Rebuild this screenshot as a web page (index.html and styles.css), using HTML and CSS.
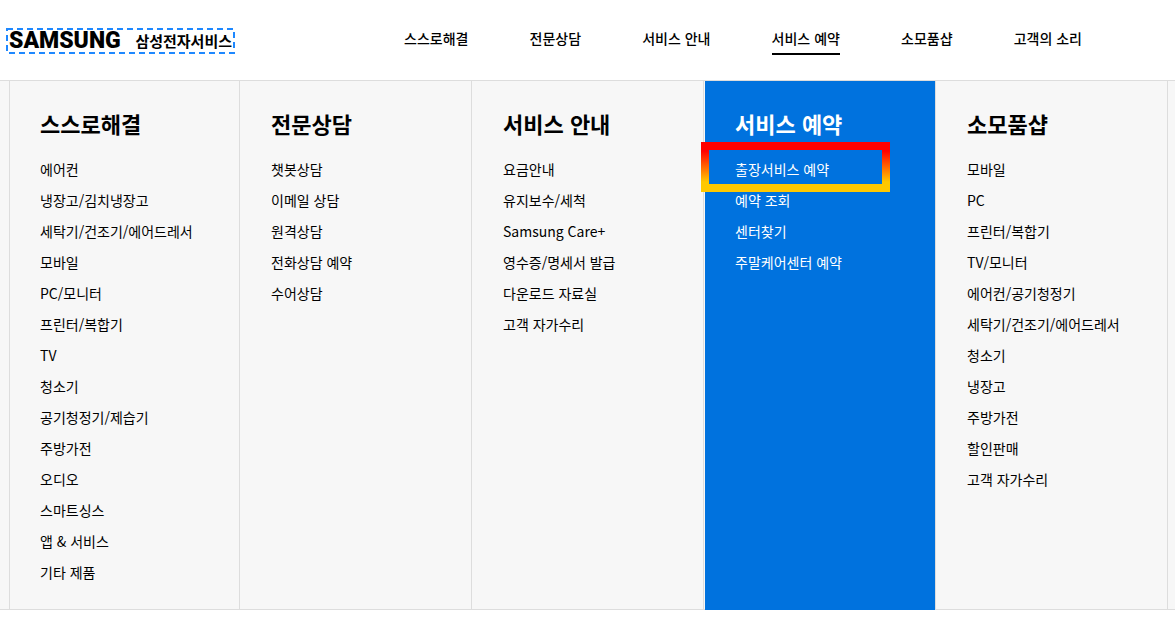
FILE: index.html
```html
<!DOCTYPE html>
<html lang="ko">
<head>
    <meta charset="UTF-8">
    <meta name="viewport" content="width=device-width, initial-scale=1.0">
    <title>삼성전자서비스</title>
    <link rel="stylesheet" href="styles.css">
</head>
<body>

    <header class="header">
        <a href="#" class="logo">
            <span class="logo-brand">SAMSUNG</span>
            <span class="logo-name">삼성전자서비스</span>
            <svg class="logo-focus" aria-hidden="true"><rect x="1" y="1" /></svg>
        </a>
        <nav class="nav">
            <a href="#">스스로해결</a>
            <a href="#">전문상담</a>
            <a href="#">서비스 안내</a>
            <a href="#" class="active">서비스 예약</a>
            <a href="#">소모품샵</a>
            <a href="#">고객의 소리</a>
        </nav>
    </header>

    <div class="menu">
        <section class="menu-col">
            <h2>스스로해결</h2>
            <ul>
                <li><a href="#">에어컨</a></li>
                <li><a href="#">냉장고/김치냉장고</a></li>
                <li><a href="#">세탁기/건조기/에어드레서</a></li>
                <li><a href="#">모바일</a></li>
                <li><a href="#">PC/모니터</a></li>
                <li><a href="#">프린터/복합기</a></li>
                <li><a href="#">TV</a></li>
                <li><a href="#">청소기</a></li>
                <li><a href="#">공기청정기/제습기</a></li>
                <li><a href="#">주방가전</a></li>
                <li><a href="#">오디오</a></li>
                <li><a href="#">스마트싱스</a></li>
                <li><a href="#">앱 &amp; 서비스</a></li>
                <li><a href="#">기타 제품</a></li>
            </ul>
        </section>
        <section class="menu-col">
            <h2>전문상담</h2>
            <ul>
                <li><a href="#">챗봇상담</a></li>
                <li><a href="#">이메일 상담</a></li>
                <li><a href="#">원격상담</a></li>
                <li><a href="#">전화상담 예약</a></li>
                <li><a href="#">수어상담</a></li>
            </ul>
        </section>
        <section class="menu-col">
            <h2>서비스 안내</h2>
            <ul>
                <li><a href="#">요금안내</a></li>
                <li><a href="#">유지보수/세척</a></li>
                <li><a href="#">Samsung Care+</a></li>
                <li><a href="#">영수증/명세서 발급</a></li>
                <li><a href="#">다운로드 자료실</a></li>
                <li><a href="#">고객 자가수리</a></li>
            </ul>
        </section>
        <section class="menu-col active">
            <h2>서비스 예약</h2>
            <ul>
                <li class="marked"><a href="#">출장서비스 예약</a></li>
                <li><a href="#">예약 조회</a></li>
                <li><a href="#">센터찾기</a></li>
                <li><a href="#">주말케어센터 예약</a></li>
            </ul>
        </section>
        <section class="menu-col">
            <h2>소모품샵</h2>
            <ul>
                <li><a href="#">모바일</a></li>
                <li><a href="#">PC</a></li>
                <li><a href="#">프린터/복합기</a></li>
                <li><a href="#">TV/모니터</a></li>
                <li><a href="#">에어컨/공기청정기</a></li>
                <li><a href="#">세탁기/건조기/에어드레서</a></li>
                <li><a href="#">청소기</a></li>
                <li><a href="#">냉장고</a></li>
                <li><a href="#">주방가전</a></li>
                <li><a href="#">할인판매</a></li>
                <li><a href="#">고객 자가수리</a></li>
            </ul>
        </section>
    </div>

</body>
</html>
```
FILE: styles.css
```css
*,
*::after {
    box-sizing: border-box;
}

body {
    margin: 0;
    font-family: "Noto Sans CJK KR", sans-serif;
    font-size: 14px;
    color: #000;
    background: #fff;
}

a {
    color: inherit;
    text-decoration: none;
}

/* Header */
.header {
    display: flex;
    align-items: center;
    height: 80px;
    padding: 2px 93px 0 6px;
}

.logo {
    position: relative;
    display: flex;
    align-items: center;
    justify-content: space-between;
    width: 229px;
    height: 26px;
    padding: 0 3px;
    white-space: nowrap;
}

.logo-brand {
    font-family: Roboto, "Liberation Sans", sans-serif;
    font-size: 23px;
    font-weight: 900;
    line-height: 26px;
}

.logo-name {
    font-size: 15px;
    font-weight: bold;
    line-height: 26px;
}

/* dashed focus ring */
.logo-focus {
    position: absolute;
    top: 0;
    left: 0;
    width: 100%;
    height: 100%;
}

.logo-focus rect {
    width: calc(100% - 2px);
    height: calc(100% - 2px);
    fill: none;
    stroke: #1e88ff;
    stroke-width: 2px;
    stroke-dasharray: 6 4;
}

.nav {
    display: flex;
    flex: 1;
    justify-content: space-between;
    margin-left: 169px;
    font-weight: 500;
}

.nav a {
    padding-bottom: 4px;
    line-height: 22px;
    border-bottom: 2px solid transparent;
}

.nav a.active {
    border-bottom-color: #000;
}

/* Full menu */
.menu {
    display: grid;
    grid-template-columns: repeat(5, 1fr);
    padding: 0 7px 0 8px;
    background: #f7f7f7;
    border-top: 1px solid #ddd;
    border-bottom: 1px solid #ddd;
}

.menu-col {
    padding: 26px 0 21px 31px;
    border-right: 1px solid #ddd;
}

.menu-col:first-child {
    margin-left: 1px;
    padding-left: 30px;
    border-left: 1px solid #ddd;
}

.menu-col.active {
    margin: 0 0 -1px 1px;
    padding-left: 30px;
    color: #fff;
    background: #0072de;
    background-clip: padding-box;
}

.menu-col h2 {
    margin: 0 0 15px;
    font-size: 22px;
    font-weight: bold;
    line-height: 32px;
}

.menu-col ul {
    margin: 0;
    padding: 0;
    list-style: none;
}

.menu-col li {
    line-height: 31px;
}

/* frame around the marked link */
.marked {
    position: relative;
}

.marked::after {
    content: "";
    position: absolute;
    top: -12px;
    left: -34px;
    width: 189px;
    height: 50px;
    border: 8px solid;
    border-image: linear-gradient(#f00 18%, #ffc800 80%) 8;
    pointer-events: none;
}
```
